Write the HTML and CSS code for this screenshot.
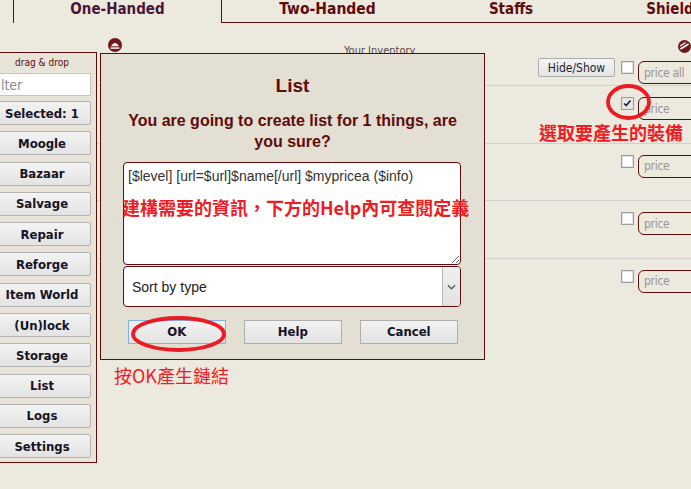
FILE: index.html
```html
<!DOCTYPE html>
<html>
<head>
<meta charset="utf-8">
<link rel="stylesheet" href="styles.css">
</head>
<body>
<div class="tabs">
  <div class="tab-spacer"></div>
  <div class="tab tab-active tab-1">One-Handed</div>
  <div class="tab tab-2">Two-Handed</div>
  <div class="tab tab-3">Staffs</div>
  <div class="tab tab-4">Shields</div>
</div>

<div class="main">
  <aside class="sidebar">
    <div class="dd-label">drag &amp; drop</div>
    <input class="filter" type="text" placeholder="filter">
    <div class="side-buttons">
      <button class="sbtn">Selected: 1</button>
      <button class="sbtn">Moogle</button>
      <button class="sbtn">Bazaar</button>
      <button class="sbtn">Salvage</button>
      <button class="sbtn">Repair</button>
      <button class="sbtn">Reforge</button>
      <button class="sbtn">Item World</button>
      <button class="sbtn">(Un)lock</button>
      <button class="sbtn">Storage</button>
      <button class="sbtn">List</button>
      <button class="sbtn">Logs</button>
      <button class="sbtn">Settings</button>
    </div>
  </aside>

  <section class="inventory">
    <div class="inv-head">
      <svg class="toggle toggle-left" viewBox="0 0 14 14" width="14" height="14">
        <circle cx="7" cy="7" r="7" fill="#6e1a1a"/>
        <path d="M3 8.2 Q7 1.6 11 8.2 Z" fill="#fff"/>
        <rect x="2.6" y="9.4" width="8.8" height="1.4" fill="#fff"/>
      </svg>
      <div class="inv-title">Your Inventory</div>
      <svg class="toggle toggle-right" viewBox="0 0 13 13" width="13" height="13">
        <circle cx="6.5" cy="6.5" r="6.5" fill="#6e1a1a"/>
        <path d="M2.5 9 L10.5 4" stroke="#fff" stroke-width="1.6"/>
        <path d="M2 6 L7.5 2.6" stroke="#fff" stroke-width="1.2"/>
      </svg>
    </div>
    <div class="inv-list">
      <div class="inv-row inv-row-head">
        <button class="hs-btn">Hide/Show</button>
        <span class="cb"></span>
        <input class="price" type="text" placeholder="price all">
      </div>
      <div class="inv-row">
        <span class="cb cb-checked">
          <svg viewBox="0 0 13 13" width="11" height="11"><path d="M2.5 6.5 L5 9 L10 3" fill="none" stroke="#222" stroke-width="2"/></svg>
        </span>
        <input class="price" type="text" placeholder="price">
      </div>
      <div class="inv-row">
        <span class="cb"></span>
        <input class="price" type="text" placeholder="price">
      </div>
      <div class="inv-row">
        <span class="cb"></span>
        <input class="price" type="text" placeholder="price">
      </div>
      <div class="inv-row inv-row-last">
        <span class="cb"></span>
        <input class="price" type="text" placeholder="price">
      </div>
    </div>
  </section>
</div>

<div class="dialog">
  <div class="dlg-title">List</div>
  <div class="dlg-text">You are going to create list for 1 things, are you sure?</div>
  <textarea class="dlg-area">[$level] [url=$url]$name[/url] $mypricea ($info)</textarea>
  <div class="dlg-select">
    <span class="sel-text">Sort by type</span>
    <span class="sel-arrow">
      <svg viewBox="0 0 10 6" width="9" height="6"><path d="M1 1 L5 5 L9 1" fill="none" stroke="#555" stroke-width="1.4"/></svg>
    </span>
  </div>
  <div class="dlg-buttons">
    <button class="dbtn dbtn-focus">OK</button>
    <button class="dbtn">Help</button>
    <button class="dbtn">Cancel</button>
  </div>
</div>

<svg class="marks" width="691" height="489" viewBox="0 0 691 489">
  <ellipse cx="178.5" cy="334" rx="45.5" ry="16" fill="none" stroke="#ea1b22" stroke-width="3.8"/>
  <ellipse cx="628.5" cy="102" rx="20.5" ry="16" fill="none" stroke="#ea1b22" stroke-width="3.8"/>
</svg>
<div class="note note-area">建構需要的資訊，下方的Help內可查閱定義</div>
<div class="note note-check">選取要產生的裝備</div>
<div class="note note-ok">按OK產生鏈結</div>
</body>
</html>
```
FILE: styles.css
```css
html, body {
  margin: 0;
  padding: 0;
}
body {
  width: 691px;
  height: 489px;
  overflow: hidden;
  position: relative;
  background: #ece9de;
  font-family: "DejaVu Sans Condensed", "DejaVu Sans", sans-serif;
  font-stretch: condensed;
  color: #5f0c0c;
}

/* Tabs */
.tabs {
  display: flex;
  height: 23px;
  width: 800px;
}
.tab-spacer {
  width: 13px;
  flex: none;
}
.tab {
  flex: none;
  box-sizing: border-box;
  height: 23px;
  border-bottom: 1px solid #5f0c0c;
  text-align: center;
  font-weight: bold;
  font-size: 15px;
  line-height: 19px;
  color: #5f0c0c;
}
.tab-active {
  border-bottom: none;
  border-left: 1px solid #5f0c0c;
  border-right: 1px solid #5f0c0c;
  color: #4a1638;
}
.tab-1 { width: 209px; }
.tab-2 { width: 211px; font-size: 15.5px; }
.tab-3 { width: 156px; }
.tab-4 { width: 170px; }

/* Main */
.main {
  display: flex;
  align-items: flex-start;
  width: 760px;
}

.sidebar {
  flex: none;
  width: 111px;
  box-sizing: border-box;
  margin-left: -14px;
  margin-top: 29px;
  border: 1px solid #5f0c0c;
  background: #e8e4d7;
  padding: 3px 5px 4px 6px;
}
.dd-label {
  font-size: 10px;
  line-height: 14px;
  text-align: center;
  color: #5f0c0c;
  margin-bottom: 3px;
}
.filter {
  display: block;
  box-sizing: border-box;
  width: 98px;
  height: 23px;
  margin: 0;
  padding: 0;
  text-indent: -1px;
  border: 1px solid #c4c4c4;
  background: #fff;
  font-family: inherit;
  font-stretch: condensed;
  font-size: 14px;
  color: #333;
}
.filter::placeholder { color: #8a8a8a; }
.side-buttons {
  display: flex;
  flex-direction: column;
  gap: 6.3px;
  margin-top: 5px;
}
.sbtn {
  box-sizing: border-box;
  width: 98px;
  height: 24px;
  margin: 0;
  padding: 0;
  border: 1px solid #b3b3b3;
  border-radius: 2px;
  background: linear-gradient(#f3f3f3, #e3e3e3);
  font-family: inherit;
  font-stretch: condensed;
  font-weight: bold;
  font-size: 13px;
  color: #141426;
}

.inventory {
  flex: none;
  width: 620px;
}
.inv-head {
  display: flex;
  align-items: flex-start;
  height: 14px;
  margin-top: 15px;
}
.toggle { flex: none; display: block; }
.toggle-left { margin-left: 11px; }
.inv-title {
  margin-left: 222px;
  margin-top: 6px;
  font-size: 11px;
  line-height: 13px;
  color: #5a4848;
  white-space: nowrap;
}
.toggle-right {
  margin-left: auto;
  margin-right: 26px;
  margin-top: 2px;
}

.inv-list {
  display: flex;
  flex-direction: column;
}
.inv-row {
  display: flex;
  justify-content: flex-end;
  align-items: flex-start;
  box-sizing: border-box;
  height: 57.5px;
  padding-right: 7px;
  border-bottom: 1px solid #d2d0cc;
}
.inv-row-head { height: 34px; }
.inv-row-last { border-bottom: none; }
.inv-row .cb, .inv-row .price { margin-top: 11px; }
.inv-row-head .cb, .inv-row-head .price { margin-top: 9px; }
.hs-btn {
  box-sizing: border-box;
  width: 77px;
  height: 19px;
  margin: 6px 0 0 0;
  padding: 0;
  border: 1px solid #adadad;
  border-radius: 2px;
  background: linear-gradient(#f5f5f5, #e4e4e4);
  font-family: inherit;
  font-stretch: condensed;
  font-size: 12px;
  color: #1c1c30;
}
.cb {
  flex: none;
  box-sizing: border-box;
  width: 13px;
  height: 13px;
  margin-left: 6px;
  border: 1px solid #9c9c9c;
  background: #fff;
  box-shadow: inset 0 0 0 1px #e2e2e2;
  display: flex;
  align-items: center;
  justify-content: center;
}
.cb-checked { background: #e9e9e9; }
.cb svg { display: block; }
.price {
  flex: none;
  box-sizing: border-box;
  width: 72px;
  height: 23px;
  margin-left: 4px;
  padding: 0 5px;
  border: 1px solid #5f0c0c;
  border-radius: 6px;
  background: #ece9dd;
  font-family: inherit;
  font-stretch: condensed;
  font-size: 12px;
  letter-spacing: -0.3px;
}
.price::placeholder { color: #9b9499; }

/* Dialog */
.dialog {
  position: absolute;
  left: 100px;
  top: 53px;
  width: 385px;
  height: 307px;
  box-sizing: border-box;
  border: 1px solid #5f0c0c;
  background: #e3dfd2;
  padding-top: 20px;
  font-family: "Liberation Sans", Arial, sans-serif;
  font-stretch: normal;
}
.dlg-title {
  text-align: center;
  font-weight: bold;
  font-size: 19px;
  line-height: 24px;
  color: #5f0c0c;
}
.dlg-text {
  margin: 11.5px 20px 0;
  text-align: center;
  font-weight: bold;
  font-size: 16px;
  line-height: 21px;
  color: #5f0c0c;
}
.dlg-area {
  display: block;
  box-sizing: border-box;
  width: 338px;
  height: 103px;
  margin: 10.5px 0 0 22px;
  padding: 5px 4px;
  border: 1px solid #5f0c0c;
  border-radius: 4px;
  background: #fff;
  font-family: "Liberation Sans", Arial, sans-serif;
  font-size: 14px;
  line-height: 16px;
  color: #333;
  resize: both;
  outline: none;
}
.dlg-select {
  display: flex;
  align-items: stretch;
  box-sizing: border-box;
  width: 338px;
  height: 41px;
  margin: 1px 0 0 22px;
  border: 1px solid #5f0c0c;
  border-radius: 4px;
  background: #fff;
  overflow: hidden;
}
.sel-text {
  flex: 1;
  display: flex;
  align-items: center;
  padding-left: 8px;
  font-size: 14px;
  color: #222;
}
.sel-arrow {
  flex: none;
  width: 17px;
  display: flex;
  align-items: center;
  justify-content: center;
  border-left: 1px solid #b8b8b8;
  background: linear-gradient(#f0f0f0, #e2e2e2);
}
.dlg-buttons {
  display: flex;
  gap: 18.5px;
  margin-top: 12.5px;
  padding-left: 27px;
}
.dbtn {
  box-sizing: border-box;
  width: 97.5px;
  height: 24px;
  margin: 0;
  padding: 0;
  border: 1px solid #adadad;
  background: linear-gradient(#f2f2f2, #e3e3e3);
  font-family: "DejaVu Sans Condensed", "DejaVu Sans", sans-serif;
  font-stretch: condensed;
  font-weight: bold;
  font-size: 13px;
  color: #141426;
}
.dbtn-focus { border-color: #7db3e8; }

/* Annotations */
.marks {
  position: absolute;
  left: 0;
  top: 0;
  pointer-events: none;
}
.note {
  position: absolute;
  white-space: nowrap;
  font-family: "Noto Sans CJK TC", "Noto Sans CJK SC", sans-serif;
  font-stretch: normal;
  font-size: 18px;
  line-height: 22px;
  color: #ee1d25;
}
.note-area { left: 122px; top: 196px; font-weight: bold; }
.note-check { left: 539px; top: 121px; font-weight: bold; }
.note-ok { left: 114px; top: 364px; }
```
